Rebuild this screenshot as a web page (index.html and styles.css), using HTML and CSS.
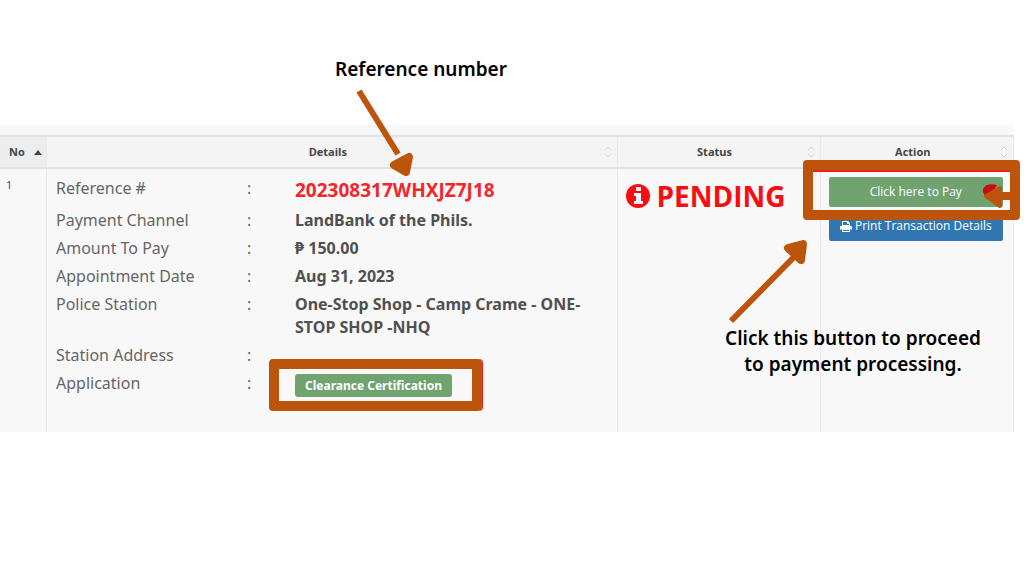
FILE: index.html
```html
<!DOCTYPE html>
<html lang="en">
<head>
<meta charset="utf-8">
<meta name="viewport" content="width=device-width, initial-scale=1">
<title>Transaction details</title>
<link rel="stylesheet" href="styles.css">
</head>
<body>
<main class="guide">
  <p class="caption caption-reference">Reference number
    <svg class="arrow arrow-reference" width="60" height="90" viewBox="0 0 60 90" aria-hidden="true"><path class="shaft" d="M3 1 42 64"/><path class="head" d="M53 67 50 82 38 75Z"/></svg>
  </p>
  <section class="panel">
    <table class="transactions">
      <colgroup><col class="col-no"><col class="col-details"><col class="col-status"><col class="col-action"></colgroup>
      <thead>
        <tr>
          <th scope="col" class="sorted"><span class="heading">No<svg class="sort-up" width="8" height="5" viewBox="0 0 8 5" aria-hidden="true"><path d="M0 5 4 0 8 5Z"/></svg></span></th>
          <th scope="col"><span class="heading">Details<svg class="sort" width="8" height="12" viewBox="0 0 8 12" aria-hidden="true"><path d="M1 4 4 1 7 4M1 8 4 11 7 8"/></svg></span></th>
          <th scope="col"><span class="heading">Status<svg class="sort" width="8" height="12" viewBox="0 0 8 12" aria-hidden="true"><path d="M1 4 4 1 7 4M1 8 4 11 7 8"/></svg></span></th>
          <th scope="col"><span class="heading">Action<svg class="sort" width="8" height="12" viewBox="0 0 8 12" aria-hidden="true"><path d="M1 4 4 1 7 4M1 8 4 11 7 8"/></svg></span></th>
        </tr>
      </thead>
      <tbody>
        <tr>
          <td class="number">1</td>
          <td class="details">
            <dl class="fields">
              <div class="field field-reference"><dt>Reference #</dt><dd class="colon">:</dd><dd class="reference">202308317WHXJZ7J18</dd></div>
              <div class="field"><dt>Payment Channel</dt><dd class="colon">:</dd><dd>LandBank of the Phils.</dd></div>
              <div class="field"><dt>Amount To Pay</dt><dd class="colon">:</dd><dd>₱ 150.00</dd></div>
              <div class="field"><dt>Appointment Date</dt><dd class="colon">:</dd><dd>Aug 31, 2023</dd></div>
              <div class="field"><dt>Police Station</dt><dd class="colon">:</dd><dd>One-Stop Shop - Camp Crame - ONE-STOP SHOP -NHQ</dd></div>
              <div class="field"><dt>Station Address</dt><dd class="colon">:</dd><dd></dd></div>
              <div class="field"><dt>Application</dt><dd class="colon">:</dd><dd><span class="badge">Clearance Certification<span class="frame frame-badge"></span></span></dd></div>
            </dl>
          </td>
          <td class="status-cell">
            <strong class="status"><svg width="24" height="24" viewBox="0 0 24 24" aria-hidden="true"><circle cx="12" cy="12" r="12"/><path class="info" d="M10 3h5v4h-5zM8 9h7v8h2v3H8v-3h2v-5H8z"/></svg>PENDING</strong>
          </td>
          <td class="action-cell">
            <div class="actions">
              <button type="button" class="button pay">Click here to Pay</button>
              <button type="button" class="button print"><svg width="12" height="11" viewBox="0 0 12 11" aria-hidden="true"><path d="M2 0h6l2 2v3H2zM3 1v3h6V3H7V1zM2 8h8v3H2zm1 1v1h6V9z" fill-rule="evenodd"/><path d="M0 5h12v4h-1V8H1v1H0z"/></svg>Print Transaction Details</button>
              <span class="frame frame-pay"></span>
              <svg class="pointer" width="38" height="28" viewBox="0 0 38 28" aria-hidden="true"><path class="dot" d="M15 3C4 0 0 6 1 10c1 3 3 5 6 6z"/><path class="head" d="M4 14 18 6 18 24Z"/><path class="bar" d="M16 14h20"/></svg>
            </div>
          </td>
        </tr>
      </tbody>
    </table>
    <p class="caption caption-pay">Click this button to proceed to payment processing.
      <svg class="arrow arrow-pay" width="84" height="88" viewBox="0 0 84 88" aria-hidden="true"><path class="shaft" d="M5 83 68 19"/><path class="head" d="M62 10 77 6 75 22Z"/></svg>
    </p>
  </section>
</main>
</body>
</html>
```
FILE: styles.css
```css
* { box-sizing: border-box; }
body {
  margin: 0;
  background: #fff;
  color: #505050;
  font-family: "Noto Sans", "Open Sans", sans-serif;
  font-size: 16px;
  line-height: 23px;
}
.guide { padding-top: 56px; }
.caption {
  margin: 0;
  color: #000;
  font-family: "Noto Sans", sans-serif;
  font-size: 19px;
  font-weight: 600;
  line-height: 26px;
}
.caption-reference {
  position: relative;
  width: max-content;
  margin-left: 335px;
}
.arrow { position: absolute; overflow: visible; }
.arrow-reference { left: 21px; top: 34px; z-index: 2; }
.arrow-pay { left: 13px; top: -87px; }
.shaft { fill: none; stroke: #bd540b; stroke-width: 6; }
.head { fill: #bd540b; stroke: #bd540b; stroke-width: 8; stroke-linejoin: round; }

.panel {
  position: relative;
  margin: 43px 10px 0 0;
  padding-top: 10px;
  background: #f8f8f8;
}
.transactions {
  width: 100%;
  border-collapse: separate;
  border-spacing: 0;
  table-layout: fixed;
  border-top: 2px solid #e2e2e2;
}
.col-no { width: 47px; }
.col-details { width: 59%; }
.col-status { width: 21%; }
.col-action { width: 20%; }
th {
  height: 32px;
  padding: 0 12px 0 4px;
  border-right: 1px solid #e9e9e9;
  border-bottom: 2px solid #e2e2e2;
  background: #f4f4f4;
  color: #454545;
  font-family: "Open Sans", sans-serif;
  font-size: 11px;
  line-height: 16px;
}
.sorted { padding: 0 4px 0 9px; background: #ededed; }
.heading { display: grid; grid-template-columns: 1fr auto 1fr; align-items: center; }
.heading::before { content: ""; }
.sorted .heading { display: flex; justify-content: space-between; }
.sorted .heading::before { display: none; }
.sort { justify-self: end; margin-right: -7px; fill: none; stroke: #d4d4d4; stroke-width: 1; }
.sort-up { fill: #444; }
td {
  height: 263px;
  padding: 8px;
  border-right: 1px solid #e9e9e9;
  vertical-align: top;
}
.number { padding: 8px 6px; font-size: 11px; line-height: 16px; }
.details { padding: 5px 16px 5px 9px; }
.fields { margin: 0; }
.field {
  display: grid;
  grid-template-columns: 191px 48px 1fr;
  padding: 3px 0 2px;
}
.field-reference { padding: 3px 0; }
dt, dd { margin: 0; }
dt, .field .colon { color: #666; font-weight: 400; }
dd { font-weight: 700; }
.field .reference { color: #f3262b; font-size: 19px; line-height: 26px; }
.badge {
  position: relative;
  display: inline-block;
  margin-top: 2px;
  padding: 0 10px;
  border-radius: 3px;
  background: #71a371;
  color: #fff;
  font-size: 12px;
  vertical-align: top;
}
.frame { position: absolute; border: 10px solid #bd540b; border-radius: 4px; pointer-events: none; }
.frame-badge { inset: -15px -30px -14px -26px; box-shadow: 1px 0 #f02020; }
.status-cell { padding: 12px 8px; }
.status {
  display: flex;
  align-items: center;
  gap: 7px;
  color: #f80d13;
  font-family: "Open Sans", sans-serif;
  font-size: 28px;
  line-height: 30px;
}
.status svg { fill: #f80d13; }
.status .info { fill: #f8f8f8; }
.action-cell { padding: 8px 10px 8px 8px; }
.actions { position: relative; display: flex; flex-direction: column; gap: 4px; }
.button {
  display: flex;
  align-items: center;
  justify-content: center;
  gap: 3px;
  height: 30px;
  padding: 0;
  border: 0;
  border-radius: 2px;
  color: #fff;
  font-family: "Open Sans", sans-serif;
  font-size: 12px;
  line-height: 16px;
}
.button svg { fill: #fff; }
.pay { background: #71a371; }
.print { background: #3276b1; }
.frame-pay { inset: -17px -17px 21px -26px; box-shadow: inset 0 2px #f02020; }
.pointer { position: absolute; top: 5px; right: -17px; }
.pointer .head { stroke-width: 4; }
.dot { fill: #c80d12; }
.bar { stroke: #bd540b; stroke-width: 8; }
.caption-pay {
  position: absolute;
  top: 200px;
  right: 21px;
  width: 280px;
  text-align: center;
}
```
